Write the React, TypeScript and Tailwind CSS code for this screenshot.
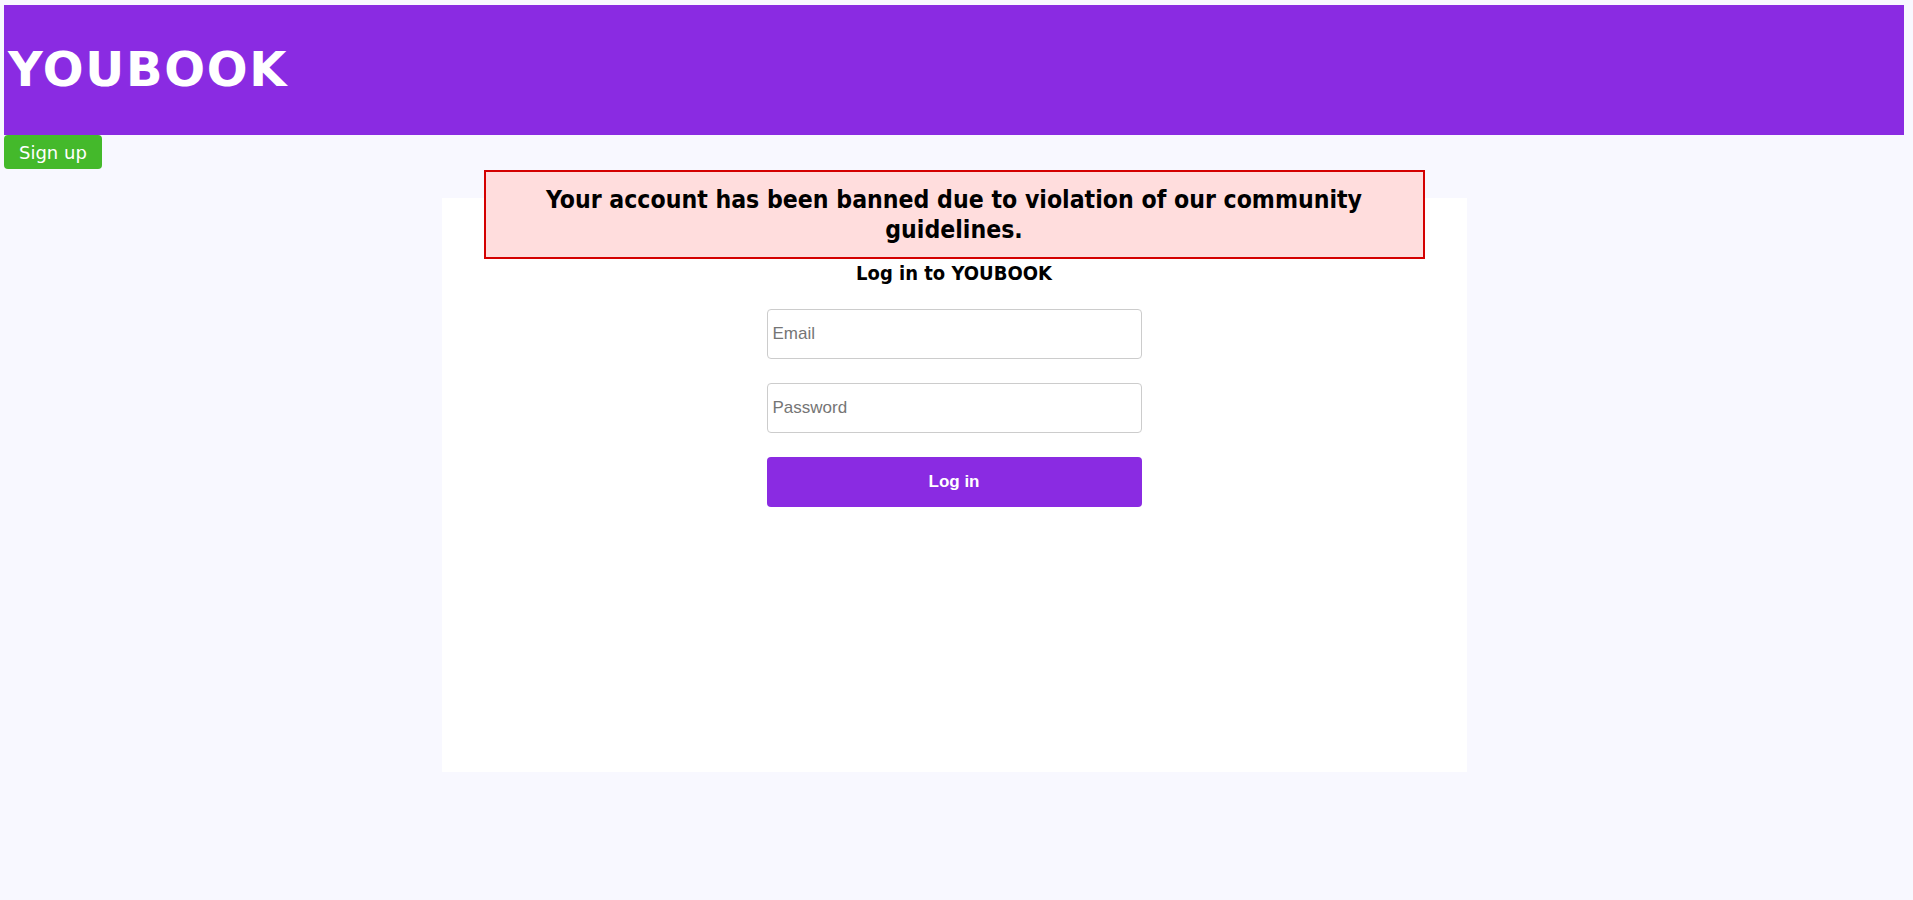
import { useState } from "react";

// Login page with banned-account notice
const App = () => {
  const [email, setEmail] = useState("");
  const [password, setPassword] = useState("");

  return (
    <div className="min-h-screen bg-[#f8f8ff] pl-1 pr-[9px] pt-[5px]">
      <header className="flex h-[130px] items-center bg-[#8a2be2] pl-1">
        <h1 className="-mt-[2px] font-['DejaVu_Sans',sans-serif] text-[48px] font-bold tracking-[1.7px] text-white">
          YOUBOOK
        </h1>
      </header>
      <button className="h-[34px] rounded-[4px] bg-[#44b92b] px-[15px] font-['DejaVu_Sans',sans-serif] text-[18px] text-white">
        Sign up
      </button>

      <div className="mx-auto mt-[29px] flex h-[574px] w-[1025px] flex-col items-center bg-white">
        <div className="-mt-[28px] flex h-[89px] w-[941px] items-center justify-center border-2 border-[#d40000] bg-[#ffdddd] px-6 text-center font-['DejaVu_Sans_Condensed','DejaVu_Sans',sans-serif] text-[24.6px] leading-[30px] font-bold text-black">
          Your account has been banned due to violation of our community guidelines.
        </div>
        <h2 className="mt-[2px] font-['DejaVu_Sans_Condensed','DejaVu_Sans',sans-serif] text-[20px] leading-[24px] font-bold text-black">
          Log in to YOUBOOK
        </h2>
        <form
          className="mt-[24px] flex w-[375px] flex-col gap-6 font-['Liberation_Sans',Arial,sans-serif]"
          onSubmit={(e) => e.preventDefault()}
        >
          <input
            type="email"
            placeholder="Email"
            value={email}
            onChange={(e) => setEmail(e.target.value)}
            className="h-[50px] rounded-[4px] border border-[#cccccc] bg-white px-[5px] text-[17px] placeholder:text-[#757575] outline-none"
          />
          <input
            type="password"
            placeholder="Password"
            value={password}
            onChange={(e) => setPassword(e.target.value)}
            className="h-[50px] rounded-[4px] border border-[#cccccc] bg-white px-[5px] text-[17px] placeholder:text-[#757575] outline-none"
          />
          <button
            type="submit"
            className="h-[50px] rounded-[4px] bg-[#8a2be2] text-[17px] font-bold text-white"
          >
            Log in
          </button>
        </form>
      </div>
    </div>
  );
};

export default App;
